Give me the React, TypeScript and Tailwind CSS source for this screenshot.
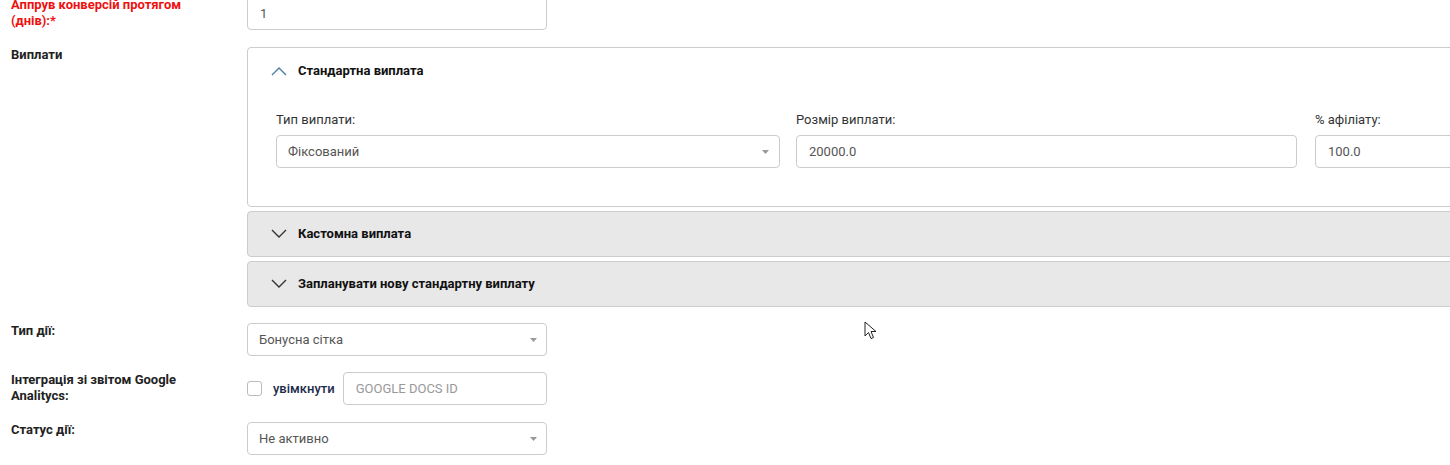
import React from "react";

function ChevronUp() {
  return (
    <svg width="16" height="10" viewBox="0 0 16 10" className="shrink-0">
      <polyline points="1,9 8,2 15,9" fill="none" stroke="#4a7fa8" strokeWidth="1.4" />
    </svg>
  );
}

function ChevronDown() {
  return (
    <svg width="16" height="10" viewBox="0 0 16 10" className="shrink-0">
      <polyline points="1,1 8,8 15,1" fill="none" stroke="#333" strokeWidth="1.4" />
    </svg>
  );
}

function Caret() {
  return (
    <svg width="7" height="4" viewBox="0 0 7 4" className="shrink-0">
      <polygon points="0,0 7,0 3.5,4" fill="#999" />
    </svg>
  );
}

function Select({ value, className = "" }: { value: string; className?: string }) {
  return (
    <div
      className={`h-[33px] border border-[#ccc] rounded-[4px] bg-white flex items-center justify-between pl-[11px] pr-[9px] text-[13px] text-[#555] ${className}`}
    >
      <span>{value}</span>
      <Caret />
    </div>
  );
}

function Input({ value, placeholder, className = "" }: { value?: string; placeholder?: string; className?: string }) {
  return (
    <div
      className={`h-[33px] border border-[#ccc] rounded-[4px] bg-white flex items-center px-[12px] text-[13px] ${value ? "text-[#555]" : "text-[#999]"} ${className}`}
    >
      {value ?? placeholder}
    </div>
  );
}

function Row({ label, red, children, className = "" }: { label: React.ReactNode; red?: boolean; children: React.ReactNode; className?: string }) {
  return (
    <div className={`flex ${className}`}>
      <div
        className={`w-[236px] shrink-0 pr-4 text-[13px] leading-[16px] font-bold ${red ? "text-[#ee1111]" : "text-[#222]"}`}
      >
        {label}
      </div>
      <div className="flex-1 min-w-0">{children}</div>
    </div>
  );
}

function CollapsedPanel({ title }: { title: string }) {
  return (
    <div className="mt-[4px] h-[46px] w-[1580px] bg-[#e8e8e8] border border-[#ccc] rounded-[4px] flex items-center pl-[23px] gap-[11px]">
      <ChevronDown />
      <span className="text-[13px] font-bold text-[#111]">{title}</span>
    </div>
  );
}

export default function App() {
  return (
    <div
      className="relative w-[1450px] h-[465px] overflow-hidden bg-white pl-[11px]"
      style={{ fontFamily: "Roboto, 'Liberation Sans', sans-serif" }}
    >
      <div className="-mt-[3px]">
        {/* Approve period */}
        <Row label={<>Аппрув конверсій протягом<br />(днів):*</>} red>
          <Input value="1" className="w-[300px]" />
        </Row>

        {/* Payouts */}
        <Row label="Виплати" className="mt-[17px]">
          <div className="w-[1580px] border border-[#ccc] rounded-[4px] bg-white">
            <div className="h-[45px] flex items-center pl-[23px] gap-[11px]">
              <ChevronUp />
              <span className="text-[13px] font-bold text-[#111]">Стандартна виплата</span>
            </div>
            <div className="flex pl-[28px] pt-[19px] pb-[38px]">
              <div className="w-[504px] shrink-0">
                <div className="text-[13px] leading-[16px] text-[#333] mb-[7px]">Тип виплати:</div>
                <Select value="Фіксований" className="!pr-[10px]" />
              </div>
              <div className="w-[501px] shrink-0 ml-[16px]">
                <div className="text-[13px] leading-[16px] text-[#333] mb-[7px]">Розмір виплати:</div>
                <Input value="20000.0" />
              </div>
              <div className="w-[501px] shrink-0 ml-[18px]">
                <div className="text-[13px] leading-[16px] text-[#333] mb-[7px]">% афіліату:</div>
                <Input value="100.0" />
              </div>
            </div>
          </div>
          <CollapsedPanel title="Кастомна виплата" />
          <CollapsedPanel title="Запланувати нову стандартну виплату" />
        </Row>

        {/* Action type */}
        <Row label="Тип дії:" className="mt-[16px]">
          <Select value="Бонусна сітка" className="w-[300px]" />
        </Row>

        {/* GA integration */}
        <Row label={<>Інтеграція зі звітом Google<br />Analitycs:</>} className="mt-[16px]">
          <div className="flex items-center w-[300px]">
            <div className="w-[15px] h-[15px] border border-[#bbb] rounded-[3px] bg-white shrink-0" />
            <span className="ml-[11px] text-[13px] font-medium text-[#1c2b4a]">увімкнути</span>
            <Input placeholder="GOOGLE DOCS ID" className="ml-[8px] flex-1" />
          </div>
        </Row>

        {/* Status */}
        <Row label="Статус дії:" className="mt-[17px]">
          <Select value="Не активно" className="w-[300px]" />
        </Row>
      </div>

      {/* mouse cursor */}
      <svg className="absolute left-[864px] top-[321px]" width="14" height="20" viewBox="0 0 14 20">
        <path d="M1 1 L1 15 L4.5 11.5 L7 17.5 L9.5 16.5 L7 10.5 L12 10.5 Z" fill="#fff" stroke="#222" strokeWidth="1" strokeLinejoin="round" />
      </svg>
    </div>
  );
}
